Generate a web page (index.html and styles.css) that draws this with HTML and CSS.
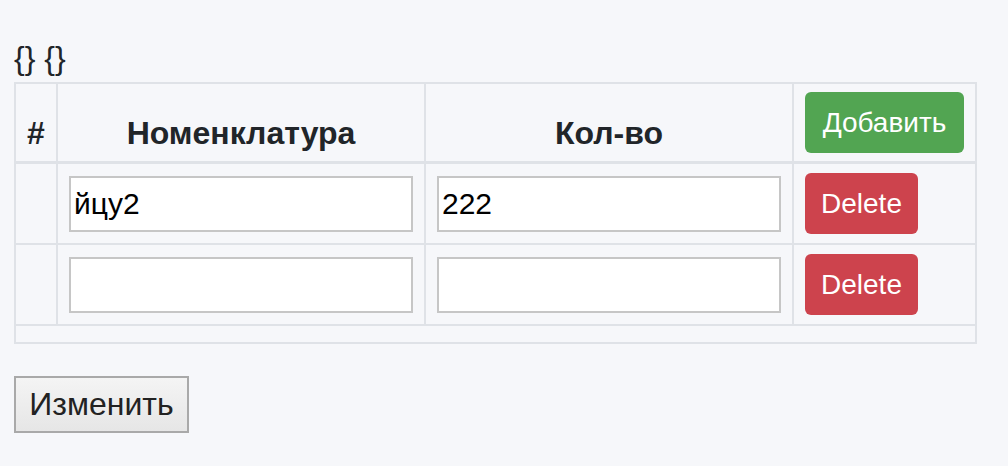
FILE: index.html
```html
<!DOCTYPE html>
<html lang="ru">
<head>
<meta charset="utf-8">
<link rel="stylesheet" href="styles.css">
</head>
<body>
<div class="page">
  <div class="braces">{} {}</div>
  <table class="grid">
    <colgroup>
      <col class="c-num">
      <col class="c-name">
      <col class="c-qty">
      <col class="c-act">
    </colgroup>
    <thead>
      <tr>
        <th class="th-num">#</th>
        <th>Номенклатура</th>
        <th>Кол-во</th>
        <th class="th-act"><button class="btn btn-add" type="button">Добавить</button></th>
      </tr>
    </thead>
    <tbody>
      <tr>
        <td></td>
        <td><input class="field" type="text" value="йцу2"></td>
        <td><input class="field" type="text" value="222"></td>
        <td class="td-act"><button class="btn btn-del" type="button">Delete</button></td>
      </tr>
      <tr>
        <td></td>
        <td><input class="field" type="text" value=""></td>
        <td><input class="field" type="text" value=""></td>
        <td class="td-act"><button class="btn btn-del" type="button">Delete</button></td>
      </tr>
    </tbody>
    <tfoot>
      <tr><td class="foot" colspan="4"></td></tr>
    </tfoot>
  </table>
  <button class="submit" type="button">Изменить</button>
</div>
</body>
</html>
```

FILE: styles.css
```css
html, body {
  margin: 0;
  padding: 0;
  background: #f6f7fa;
}
body {
  font-family: "Liberation Sans", Arial, sans-serif;
  color: #212529;
  font-size: 32px;
}
.page {
  padding: 40px 14px 0 14px;
}
.braces {
  font-size: 32px;
  line-height: 36px;
  height: 42px;
  color: #212529;
}
.grid {
  border-collapse: collapse;
  table-layout: fixed;
  width: 961px;
  border: 2px solid #dfe2e7;
}
.c-num { width: 42px; }
.c-name { width: 368px; }
.c-qty { width: 368px; }
.c-act { width: 183px; }
.grid th,
.grid td {
  border: 2px solid #dfe2e7;
  padding: 9px 11px;
}
.grid th {
  font-weight: 700;
  text-align: center;
  vertical-align: bottom;
  line-height: 40px;
  padding-top: 8px;
  padding-bottom: 8px;
  border-bottom: 3px solid #dfe2e7;
}
.grid th.th-act {
  text-align: left;
  vertical-align: middle;
  line-height: 0;
}
.grid td { vertical-align: middle; line-height: 0; }
.grid td.foot { height: 16px; padding: 0; }
.btn {
  font-family: "Liberation Sans", Arial, sans-serif;
  font-size: 28px;
  line-height: 36px;
  color: #fff;
  border: none;
  border-radius: 6px;
  height: 61px;
  padding: 0;
  text-align: center;
  display: inline-block;
  vertical-align: middle;
}
.btn-add { background: #52a552; width: 159px; }
.btn-del { background: #cd434d; width: 113px; }
.field {
  display: block;
  box-sizing: border-box;
  width: 344px;
  height: 56px;
  border: 2px solid #c6c6c6;
  background: #fff;
  font-family: "Liberation Sans", Arial, sans-serif;
  font-size: 30px;
  color: #000;
  padding: 0 3px;
  margin: 0;
}
.submit {
  display: block;
  margin-top: 32px;
  box-sizing: border-box;
  width: 175px;
  height: 57px;
  border: 2px solid #a9a9a9;
  background: linear-gradient(#f4f4f4, #e6e6e6);
  font-family: "Liberation Sans", Arial, sans-serif;
  font-size: 32px;
  color: #222;
  padding: 0;
}
```
